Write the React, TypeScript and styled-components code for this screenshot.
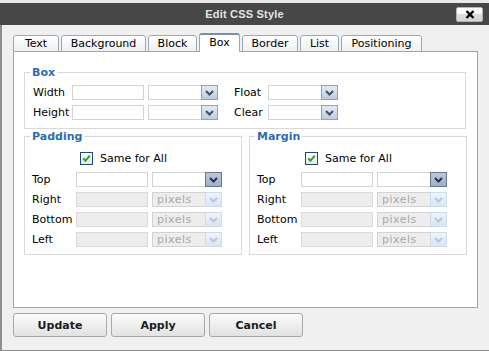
import styled, { createGlobalStyle } from "styled-components"

type Tone = "normal" | "active" | "disabled"

const tabs = [
    { label: "Text", width: 46 },
    { label: "Background", width: 85 },
    { label: "Block", width: 49 },
    { label: "Box", width: 41 },
    { label: "Border", width: 56 },
    { label: "List", width: 39 },
    { label: "Positioning", width: 81 },
]

const sides = ["Top", "Right", "Bottom", "Left"]

const GlobalStyle = createGlobalStyle`
    html, body {
        margin: 0;
        padding: 0;
        background: #e9e9e9;
    }
    body {
        font-family: "DejaVu Sans", Verdana, sans-serif;
        font-size: 11px;
        color: #000;
    }
`

// 드롭다운 화살표
const Chevron = ({ color }: { color: string }) => (
    <svg width="9" height="6" viewBox="0 0 9 6">
        <path d="M1 1 L4.5 4.5 L8 1" fill="none" stroke={color} strokeWidth="2" />
    </svg>
)

const chevronColor: Record<Tone, string> = {
    normal: "#44505e",
    active: "#2a3340",
    disabled: "#bcc6d0",
}

const Select = ({ tone = "normal", value = "" }: { tone?: Tone; value?: string }) => (
    <SelectBox $disabled={tone === "disabled"}>
        <SelectValue>{value}</SelectValue>
        <ArrowBox $tone={tone}>
            <Chevron color={chevronColor[tone]} />
        </ArrowBox>
    </SelectBox>
)

const Checkbox = () => (
    <CheckMark width="13" height="13" viewBox="0 0 13 13">
        <defs>
            <linearGradient id="cbg" x1="0" y1="0" x2="0" y2="1">
                <stop offset="0" stopColor="#ffffff" />
                <stop offset="1" stopColor="#e4e8ec" />
            </linearGradient>
        </defs>
        <rect x="0.5" y="0.5" width="12" height="12" fill="url(#cbg)" stroke="#1f4a78" />
        <path d="M3.2 6.4 L5.4 8.8 L9.8 3.6" fill="none" stroke="#27a12b" strokeWidth="2" />
    </CheckMark>
)

// 패딩 / 마진 그룹
const SideGroup = ({ title }: { title: string }) => (
    <Group $width={218} $left={7}>
        <Legend>{title}</Legend>
        <CheckRow>
            <Checkbox />
            <span>Same for All</span>
        </CheckRow>
        <Rows>
            {sides.map((side, i) => (
                <Row key={side}>
                    <Label $width={40}>{side}</Label>
                    <TextInput disabled={i > 0} />
                    {i === 0 ? <Select tone="active" /> : <Select tone="disabled" value="pixels" />}
                </Row>
            ))}
        </Rows>
    </Group>
)

const App = () => (
    <>
        <GlobalStyle />
        <Dialog>
            <TitleBar>
                <span />
                <Title>Edit CSS Style</Title>
                <CloseButton>
                    <svg width="10" height="9" viewBox="0 0 10 9">
                        <path d="M1.5 1 L8.5 8 M8.5 1 L1.5 8" stroke="#000" strokeWidth="2.4" />
                    </svg>
                </CloseButton>
            </TitleBar>
            <Body>
                <TabStrip>
                    {tabs.map((t) => (
                        <Tab key={t.label} $width={t.width} $active={t.label === "Box"}>
                            {t.label}
                        </Tab>
                    ))}
                </TabStrip>
                <Panel>
                    <Group $width={442} $left={8} $bottom={8}>
                        <Legend>Box</Legend>
                        <Rows>
                            <Row>
                                <Label $width={35}>Width</Label>
                                <TextInput />
                                <Select />
                                <Label $width={30} $gapBefore={12}>
                                    Float
                                </Label>
                                <Select />
                            </Row>
                            <Row>
                                <Label $width={35}>Height</Label>
                                <TextInput />
                                <Select />
                                <Label $width={30} $gapBefore={12}>
                                    Clear
                                </Label>
                                <Select />
                            </Row>
                        </Rows>
                    </Group>
                    <Pair>
                        <SideGroup title="Padding" />
                        <SideGroup title="Margin" />
                    </Pair>
                </Panel>
                <ButtonBar>
                    <Button>Update</Button>
                    <Button>Apply</Button>
                    <Button>Cancel</Button>
                </ButtonBar>
            </Body>
        </Dialog>
    </>
)

export default App

const Dialog = styled.div`
    margin-top: 3px;
    width: 489px;
    height: 348px;
    display: flex;
    flex-direction: column;
`

const TitleBar = styled.div`
    height: 22px;
    flex-shrink: 0;
    background: #474747;
    display: grid;
    grid-template-columns: 1fr auto 1fr;
    align-items: center;
`

const Title = styled.div`
    font-family: "Liberation Sans", Arial, sans-serif;
    font-weight: 700;
    font-size: 11px;
    color: #e4e4e4;
    letter-spacing: 0.2px;
`

const CloseButton = styled.div`
    justify-self: end;
    margin-right: 6px;
    width: 27px;
    height: 15px;
    box-sizing: border-box;
    border: 1px solid #b4b4b4;
    border-radius: 2px;
    background: linear-gradient(#ffffff 0, #f8f8f8 50%, #dcdcdc 50%, #d6d6d6 100%);
    display: flex;
    align-items: center;
    justify-content: center;
`

const Body = styled.div`
    flex: 1;
    background: #f0f0f0;
    border-left: 2px solid #8c8c8c;
    border-bottom: 1px solid #8c8c8c;
    padding: 8px 0 0 11px;
`

const TabStrip = styled.div`
    display: flex;
    align-items: flex-end;
    gap: 2px;
    height: 19px;
    margin-bottom: -1px;
    position: relative;
    z-index: 1;
`

const Tab = styled.div<{ $width: number; $active?: boolean }>`
    width: ${(p) => p.$width}px;
    height: ${(p) => (p.$active ? 19 : 17)}px;
    box-sizing: border-box;
    border: 1px solid #97a9b7;
    border-top: ${(p) => (p.$active ? "2px solid #7590a8" : "1px solid #97a9b7")};
    border-bottom: ${(p) => (p.$active ? "none" : "1px solid #97a9b7")};
    border-radius: 3px 3px 0 0;
    background: ${(p) => (p.$active ? "#fff" : "linear-gradient(#ffffff, #eef0f2)")};
    text-align: center;
    line-height: ${(p) => (p.$active ? 16 : 15)}px;
`

const Panel = styled.div`
    width: 465px;
    height: 257px;
    box-sizing: border-box;
    border: 1px solid #98a8b3;
    background: #fff;
    padding: 14px 10px 0;
    display: flex;
    flex-direction: column;
    gap: 1px;
`

const Group = styled.fieldset<{ $width: number; $left: number; $bottom?: number }>`
    margin: 0;
    width: ${(p) => p.$width}px;
    box-sizing: border-box;
    border: 1px solid #d9d9d9;
    padding: 6px 6px ${(p) => p.$bottom ?? 7}px ${(p) => p.$left}px;
    min-width: 0;

    & > legend {
        margin-left: ${(p) => 5 - p.$left}px;
    }
`

const Legend = styled.legend`
    padding: 0 2px;
    font-weight: 700;
    font-size: 11px;
    line-height: 13px;
    color: #2d6cb2;
`

const Rows = styled.div`
    display: flex;
    flex-direction: column;
    gap: 5px;
`

const Row = styled.div`
    display: flex;
    align-items: center;
    gap: 4px;
    height: 15px;
`

const Label = styled.span<{ $width: number; $gapBefore?: number }>`
    width: ${(p) => p.$width}px;
    margin-left: ${(p) => p.$gapBefore ?? 0}px;
    white-space: nowrap;
    flex-shrink: 0;
`

const TextInput = styled.input`
    width: 72px;
    height: 15px;
    box-sizing: border-box;
    margin: 0;
    padding: 0 3px;
    border: 1px solid #d3d3d3;
    background: #fff;
    flex-shrink: 0;

    &:disabled {
        background: #ededed;
        border-color: #dadada;
    }
`

const SelectBox = styled.div<{ $disabled?: boolean }>`
    width: 70px;
    height: 15px;
    box-sizing: border-box;
    border: 1px solid #d3d3d3;
    background: ${(p) => (p.$disabled ? "#ededed" : "#fff")};
    display: flex;
    align-items: center;
    flex-shrink: 0;
`

const SelectValue = styled.span`
    flex: 1;
    padding-left: 4px;
    color: #a9a9a9;
    letter-spacing: 0.5px;
`

const arrowStyles: Record<Tone, string> = {
    normal: "border-color: #8fa3bc; background: linear-gradient(#e3ebf5, #bccde2);",
    active: "border-color: #66788f; background: linear-gradient(#b9c7da, #9fb1c9);",
    disabled: "border-color: #cddbeb; background: linear-gradient(#eef4fb, #d9e5f4);",
}

const ArrowBox = styled.div<{ $tone: Tone }>`
    width: 17px;
    height: 15px;
    margin: -1px -1px -1px 0;
    box-sizing: border-box;
    border: 1px solid;
    ${(p) => arrowStyles[p.$tone]}
    display: flex;
    align-items: center;
    justify-content: center;
`

const Pair = styled.div`
    display: flex;
    gap: 7px;
`

const CheckRow = styled.div`
    display: flex;
    align-items: center;
    gap: 7px;
    height: 15px;
    margin: 2px 0 6px 48px;
`

const CheckMark = styled.svg`
    flex-shrink: 0;
`

const ButtonBar = styled.div`
    display: flex;
    gap: 4px;
    margin-top: 5px;
`

const Button = styled.button`
    width: 94px;
    height: 24px;
    margin: 0;
    border: 1px solid #a8a8a8;
    border-radius: 3px;
    background: linear-gradient(#fbfbfb, #e2e2e2);
    font-family: "DejaVu Sans", Verdana, sans-serif;
    font-weight: 700;
    font-size: 11px;
    color: #1c1c1c;
`
